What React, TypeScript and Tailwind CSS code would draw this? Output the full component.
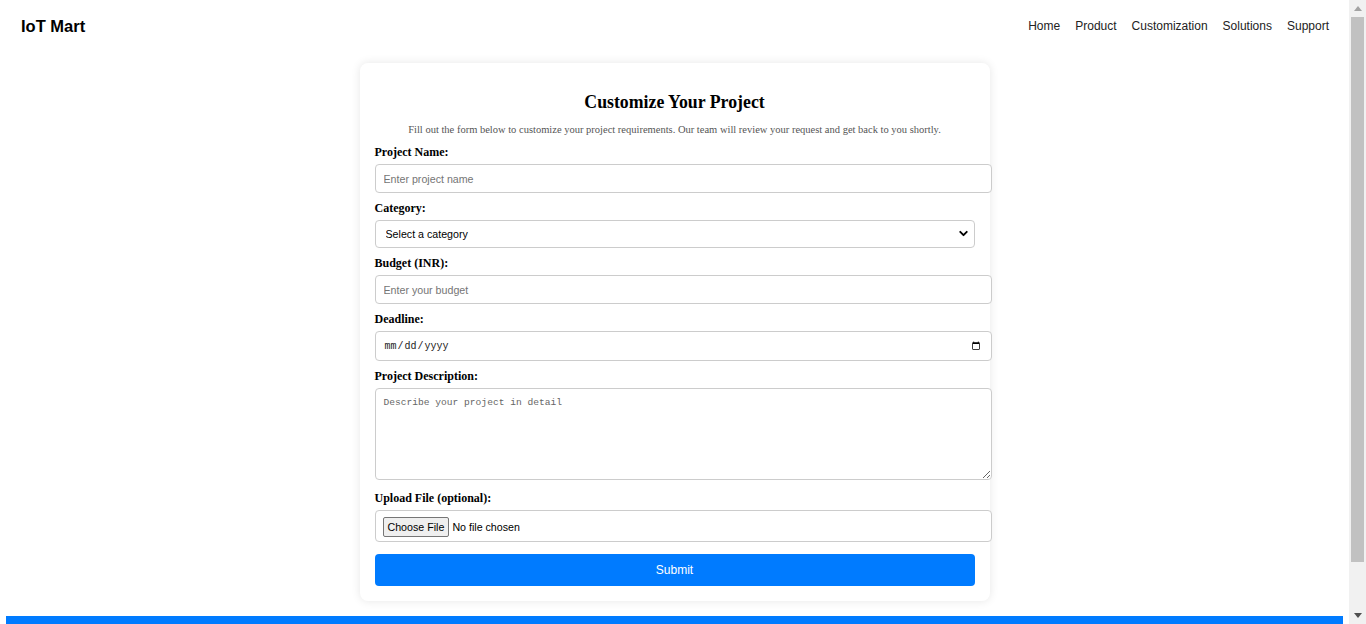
import { ChevronDown } from "lucide-react";

const navLinks = ["Home", "Product", "Customization", "Solutions", "Support"];

function Header() {
  return (
    <header className="h-[50px] pt-[2px] pl-[21px] pr-5 flex items-center justify-between font-['Liberation_Sans',Arial,sans-serif]">
      <div className="text-[16.5px] font-bold text-black">IoT Mart</div>
      <nav className="flex items-center gap-[15px] text-[12px] text-[#222]">
        {navLinks.map((l) => (
          <a key={l} href="#" className="hover:underline">
            {l}
          </a>
        ))}
      </nav>
    </header>
  );
}

const inputCls =
  "block w-[617px] h-[29px] px-2 border border-[#ccc] rounded-[4px] bg-white text-[10.67px] text-black font-['Liberation_Sans',Arial,sans-serif] placeholder:text-[#757575] outline-none";

function Label({ children }: { children: React.ReactNode }) {
  return <label className="block mb-[5px] text-[12px] leading-[14px] font-bold text-black">{children}</label>;
}

function CustomizeForm() {
  return (
    <form
      onSubmit={(e) => e.preventDefault()}
      className="w-[630px] mx-auto mt-[13px] p-[15px] bg-white rounded-lg shadow-[0_0_10px_rgba(0,0,0,0.1)] font-['Liberation_Serif','Times_New_Roman',serif]"
    >
      <h2 className="mt-[14px] text-center text-[17.8px] leading-[20px] font-bold text-black">Customize Your Project</h2>
      <p className="mt-[12px] text-center text-[10.5px] leading-[12px] text-[#555]">
        Fill out the form below to customize your project requirements. Our team will review your request and get back to you shortly.
      </p>

      <div className="mt-[9px]">
        <Label>Project Name:</Label>
        <input type="text" placeholder="Enter project name" className={inputCls} />
      </div>

      <div className="mt-2">
        <Label>Category:</Label>
        <div className="relative w-[600px]">
          <select className="block w-full h-[28px] pl-[10px] pr-8 border border-[#ccc] rounded-[4px] bg-white appearance-none text-[10.67px] text-black font-['Liberation_Sans',Arial,sans-serif] outline-none">
            <option>Select a category</option>
            <option>Home Automation</option>
            <option>Smart Agriculture</option>
            <option>Industrial IoT</option>
            <option>Healthcare</option>
          </select>
          <ChevronDown size={13} strokeWidth={3.5} className="absolute right-[5px] top-[7px] text-black pointer-events-none" />
        </div>
      </div>

      <div className="mt-2">
        <Label>Budget (INR):</Label>
        <input type="number" placeholder="Enter your budget" className={inputCls} />
      </div>

      <div className="mt-2">
        <Label>Deadline:</Label>
        <input
          type="date"
          className="block w-[617px] h-[30px] px-2 border border-[#ccc] rounded-[4px] bg-white text-[10px] text-[#222] font-['Liberation_Mono',monospace] outline-none [&::-webkit-datetime-edit-month-field]:bg-transparent [&::-webkit-datetime-edit-month-field]:text-[#222]"
        />
      </div>

      <div className="mt-2">
        <Label>Project Description:</Label>
        <textarea
          placeholder="Describe your project in detail"
          className="block w-[617px] h-[92px] px-2 pt-[8px] pb-[6px] border border-[#ccc] rounded-[4px] bg-white text-[9.6px] leading-[12px] text-black font-['Liberation_Mono',monospace] placeholder:text-[#666] outline-none"
        />
      </div>

      <div className="mt-[11px]">
        <Label>Upload File (optional):</Label>
        <input
          type="file"
          className="block w-[617px] h-[32px] pl-[7px] pr-2 py-[6px] border border-[#ccc] rounded-[4px] bg-white text-[10.67px] text-black font-['Liberation_Sans',Arial,sans-serif] file:mr-[3px] file:px-[4px] file:py-[1px] file:border file:border-[#767676] file:rounded-[2px] file:bg-[#efefef] file:text-black"
        />
      </div>

      <button
        type="submit"
        className="mt-3 w-[600px] h-[32px] rounded-[4px] bg-[#007bff] text-white text-[12px] font-['Liberation_Sans',Arial,sans-serif] hover:bg-[#0069d9]"
      >
        Submit
      </button>
    </form>
  );
}

// window scrollbar as it appears in the screenshot
function ScrollBar() {
  return (
    <div className="w-[17px] h-screen shrink-0 bg-[#f1f1f1] flex flex-col">
      <div className="h-[17px] flex items-center justify-center">
        <svg width="8" height="5" viewBox="0 0 8 5">
          <path d="M4 0L8 5H0z" fill="#a3a3a3" />
        </svg>
      </div>
      <div className="mx-[2px] h-[545px] bg-[#c1c1c1]" />
      <div className="flex-1" />
      <div className="h-[17px] flex items-center justify-center">
        <svg width="8" height="5" viewBox="0 0 8 5">
          <path d="M0 0H8L4 5z" fill="#505050" />
        </svg>
      </div>
    </div>
  );
}

export default function App() {
  return (
    <div className="h-screen flex bg-white overflow-hidden">
      <div className="flex-1 min-w-0 h-screen overflow-hidden">
        <Header />
        <CustomizeForm />
        <footer className="mx-[6px] mt-[15px] h-[56px] bg-[#007bff]" />
      </div>
      <ScrollBar />
    </div>
  );
}
